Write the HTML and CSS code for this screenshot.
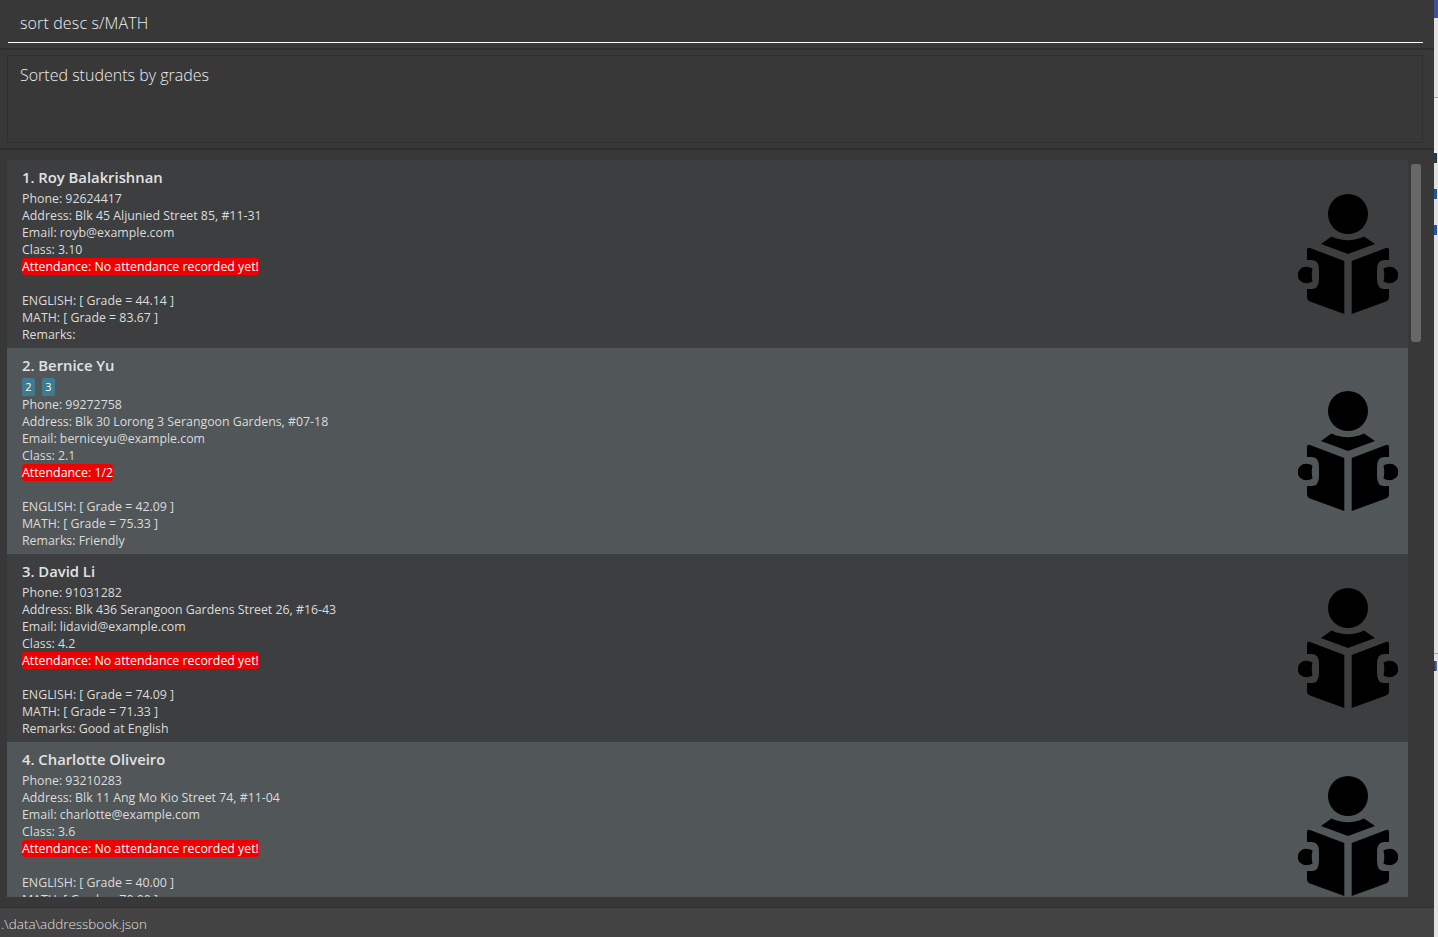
FILE: index.html
```html
<!DOCTYPE html>
<html lang="en">
<head>
  <meta charset="UTF-8">
  <title>Address Book</title>
  <link rel="stylesheet" href="styles.css">
</head>
<body>
  <svg class="defs" width="0" height="0">
    <symbol id="reader" viewBox="0 0 100 120">
      <circle cx="50" cy="20" r="20"/>
      <path d="M23 50 L33.5 42.5 Q50 50 66 42.5 L77 50 L50 60 Z"/>
      <path d="M12 54 L46.3 67 L46.3 120 L12 107.5 Q9 106 9 103 L9 95 L14 95 Q21 95 21 85 L21 76 Q21 66 14 66 L9 66 L9 56 Q9 53 12 54 Z"/>
      <path d="M88 54 L53.7 67 L53.7 120 L88 107.5 Q91 106 91 103 L91 95 L86 95 Q79 95 79 85 L79 76 Q79 66 86 66 L91 66 L91 56 Q91 53 88 54 Z"/>
      <path d="M8 72.7 Q12 72.7 14.5 74.5 Q13 81 14.5 87.5 Q12 89.3 8 89.3 A8.3 8.3 0 0 1 8 72.7 Z"/>
      <path d="M92 72.7 Q88 72.7 85.5 74.5 Q87 81 85.5 87.5 Q88 89.3 92 89.3 A8.3 8.3 0 0 0 92 72.7 Z"/>
    </symbol>
  </svg>

  <div class="window">
    <div class="app">
      <div class="command-box">
        <div class="command-input">sort desc s/MATH</div>
      </div>

      <div class="result-pane">
        <div class="result-box">Sorted students by grades</div>
      </div>

      <div class="list-pane">
        <div class="list">
          <!-- 1 -->
          <div class="card">
            <div class="info">
              <div class="name">1. Roy Balakrishnan</div>
              <div class="line">Phone: 92624417</div>
              <div class="line">Address: Blk 45 Aljunied Street 85, #11-31</div>
              <div class="line">Email: royb@example.com</div>
              <div class="line">Class: 3.10</div>
              <div class="line"><span class="attendance">Attendance: No attendance recorded yet!</span></div>
              <div class="line blank"></div>
              <div class="line">ENGLISH: [ Grade = 44.14 ]</div>
              <div class="line">MATH: [ Grade = 83.67 ]</div>
              <div class="line">Remarks:</div>
            </div>
            <svg class="avatar"><use href="#reader"/></svg>
          </div>

          <!-- 2 -->
          <div class="card alt">
            <div class="info">
              <div class="name">2. Bernice Yu</div>
              <div class="tags"><span class="tag">2</span><span class="tag">3</span></div>
              <div class="line">Phone: 99272758</div>
              <div class="line">Address: Blk 30 Lorong 3 Serangoon Gardens, #07-18</div>
              <div class="line">Email: berniceyu@example.com</div>
              <div class="line">Class: 2.1</div>
              <div class="line"><span class="attendance">Attendance: 1/2</span></div>
              <div class="line blank"></div>
              <div class="line">ENGLISH: [ Grade = 42.09 ]</div>
              <div class="line">MATH: [ Grade = 75.33 ]</div>
              <div class="line">Remarks: Friendly</div>
            </div>
            <svg class="avatar"><use href="#reader"/></svg>
          </div>

          <!-- 3 -->
          <div class="card">
            <div class="info">
              <div class="name">3. David Li</div>
              <div class="line">Phone: 91031282</div>
              <div class="line">Address: Blk 436 Serangoon Gardens Street 26, #16-43</div>
              <div class="line">Email: lidavid@example.com</div>
              <div class="line">Class: 4.2</div>
              <div class="line"><span class="attendance">Attendance: No attendance recorded yet!</span></div>
              <div class="line blank"></div>
              <div class="line">ENGLISH: [ Grade = 74.09 ]</div>
              <div class="line">MATH: [ Grade = 71.33 ]</div>
              <div class="line">Remarks: Good at English</div>
            </div>
            <svg class="avatar"><use href="#reader"/></svg>
          </div>

          <!-- 4 -->
          <div class="card alt">
            <div class="info">
              <div class="name">4. Charlotte Oliveiro</div>
              <div class="line">Phone: 93210283</div>
              <div class="line">Address: Blk 11 Ang Mo Kio Street 74, #11-04</div>
              <div class="line">Email: charlotte@example.com</div>
              <div class="line">Class: 3.6</div>
              <div class="line"><span class="attendance">Attendance: No attendance recorded yet!</span></div>
              <div class="line blank"></div>
              <div class="line">ENGLISH: [ Grade = 40.00 ]</div>
              <div class="line">MATH: [ Grade = 70.00 ]</div>
              <div class="line last"></div>
            </div>
            <svg class="avatar"><use href="#reader"/></svg>
          </div>
        </div>
        <div class="scrollbar"><div class="thumb"></div></div>
      </div>

      <div class="status-bar">.\data\addressbook.json</div>
    </div>

    <!-- window behind the app, only a sliver shows -->
    <div class="behind">
      <div class="sliver blue"></div>
      <div class="sliver gap-a"></div>
      <div class="sliver rule"></div>
      <div class="sliver gap-b"></div>
      <div class="sliver dark"></div>
      <div class="sliver gap-c"></div>
      <div class="sliver link"></div>
      <div class="sliver gap-c"></div>
      <div class="sliver link"></div>
      <div class="sliver gap-d"></div>
      <div class="sliver rule"></div>
      <div class="sliver gap-e"></div>
      <div class="sliver mixed"></div>
    </div>
  </div>
</body>
</html>
```

FILE: styles.css
```css
html, body {
  height: 100%;
}
body {
  margin: 0;
  background-color: #383838;
  color: #dcdcdc;
  font-family: 'Open Sans', 'Liberation Sans', sans-serif;
  font-size: 12.35px;
  overflow: hidden;
}
.defs {
  display: block;
  height: 0;
}
.window {
  display: flex;
  height: 937px;
}
.app {
  flex: 1;
  min-width: 0;
  display: flex;
  flex-direction: column;
  background-color: #383838;
}

.behind {
  width: 4px;
  background-color: #e4e4e4;
}
.sliver.blue {
  height: 18px;
  background-color: #3f4f9f;
}
.sliver.gap-a {
  height: 79px;
}
.sliver.rule {
  height: 1px;
  background-color: #a8a8a8;
}
.sliver.gap-b {
  height: 55px;
  background-color: #f0f0f0;
}
.sliver.dark {
  height: 10px;
  width: 3px;
  background-color: #2c3a44;
}
.sliver.gap-c {
  height: 26px;
}
.sliver.link {
  height: 10px;
  width: 3px;
  background-color: #1d5a9a;
}
.sliver.gap-d {
  height: 418px;
}
.sliver.gap-e {
  height: 7px;
}
.sliver.mixed {
  height: 10px;
  width: 3px;
  background: linear-gradient(to right, #3a2a3a, #5a8ab8);
}

.command-box {
  height: 48px;
  padding: 0 11px 0 8px;
  border-bottom: 2px solid #2f2f2f;
}
.command-input {
  height: 42px;
  line-height: 46px;
  padding-left: 12px;
  border-bottom: 1px solid #fff;
  font-size: 16px;
  font-weight: 300;
  letter-spacing: 0.13px;
  color: #eeeeee;
}

.result-pane {
  height: 100px;
  padding: 5px 11px 0 7px;
  border-bottom: 2px solid #2f2f2f;
  box-sizing: border-box;
}
.result-box {
  height: 88px;
  padding: 8px 12px;
  border: 1px solid #2f2f2f;
  box-sizing: border-box;
  font-size: 16px;
  font-weight: 300;
  color: #eeeeee;
}

.list-pane {
  flex: 1;
  min-height: 0;
  display: flex;
  padding: 10px 0 0 7px;
  overflow: hidden;
  border-bottom: 10px solid #383838;
}
.list {
  width: 1401px;
  flex-shrink: 0;
  overflow: hidden;
}
.card {
  display: flex;
  align-items: center;
  justify-content: space-between;
  padding: 0 10px 0 15px;
  background-color: #3c3e3f;
}
.card.alt {
  background-color: #515658;
}
.info {
  padding: 7px 0 5px;
}
.name {
  font-size: 14.8px;
  font-weight: 600;
  line-height: 20px;
  margin-bottom: 3px;
  color: #e2e2e2;
}
.line {
  height: 17px;
  line-height: 17px;
  white-space: nowrap;
}
.tags {
  display: flex;
  gap: 7px;
  height: 18px;
}
.tag {
  width: 13px;
  height: 18px;
  line-height: 18px;
  text-align: center;
  border-radius: 2px;
  background-color: #3e7b91;
  color: #fff;
  font-size: 11px;
}
.attendance {
  display: inline-block;
  height: 17px;
  border-radius: 3px;
  background-color: #f00000;
  color: #fff;
}
.avatar {
  width: 100px;
  height: 120px;
  flex-shrink: 0;
  fill: #000;
}

.scrollbar {
  flex: 1;
  padding: 4px 0 0 3px;
}
.thumb {
  width: 10px;
  height: 178px;
  border-radius: 3px;
  background-color: #686868;
}

.status-bar {
  height: 29px;
  line-height: 32px;
  padding-left: 1px;
  border-top: 1px solid #2f2f2f;
  background-color: #434343;
  font-size: 13.45px;
  font-weight: 300;
  color: #e0e0e0;
}
```
